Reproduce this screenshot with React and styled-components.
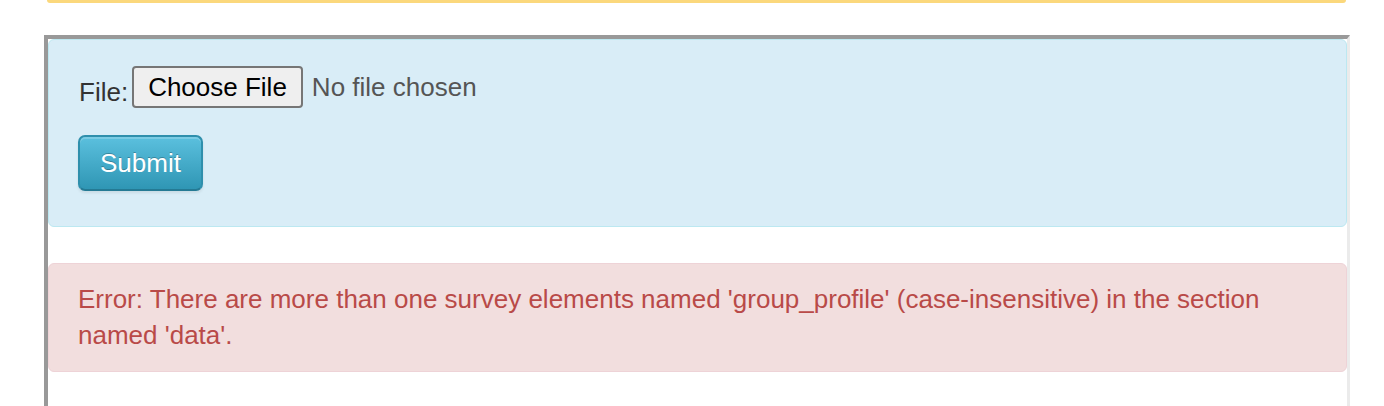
import React from 'react';
import styled, { createGlobalStyle } from 'styled-components';

const GlobalStyle = createGlobalStyle`
  body {
    margin: 0;
    background: #fff;
    font-family: "Liberation Sans", Arial, sans-serif;
    font-size: 26px;
    line-height: 36px;
    color: #333;
  }
`;

const WarningEdge = styled.div`
  margin: 0 38px 0 47px;
  height: 3px;
  background: #fbd87c;
  border-radius: 0 0 8px 8px;
`;

const Frame = styled.div`
  margin: 32px 34px 0 44px;
  min-height: 380px;
  border-style: solid;
  border-width: 4px 3px 0 4px;
  border-color: #999 #ebebeb #ebebeb #999;
`;

const Alert = styled.div`
  border: 1px solid ${p => (p.$error ? '#eed3d7' : '#bce8f1')};
  background: ${p => (p.$error ? '#f2dede' : '#d9edf7')};
  color: ${p => (p.$error ? '#b94a48' : '#333')};
  border-radius: 6px;
  padding: ${p => (p.$error ? '17px 30px 18px 29px' : '26px 30px 35px 29px')};
  margin-bottom: 36px;
`;

const FieldRow = styled.div`
  display: flex;
  align-items: center;
  height: 42px;
  margin-bottom: 27px;
`;

const Label = styled.label`
  margin: 9px 4px 0 1px;
`;

const FileButton = styled.button`
  font: inherit;
  line-height: 30px;
  height: 42px;
  padding: 0 14px;
  color: #000;
  background: #efefef;
  border: 2px solid #767676;
  border-radius: 4px;
`;

const FileStatus = styled.span`
  margin-left: 9px;
  color: #555;
  margin-bottom: 1px;
`;

const SubmitButton = styled.button`
  display: block;
  font: inherit;
  width: 125px;
  height: 56px;
  color: #fff;
  text-shadow: 0 -1px 0 rgba(0, 0, 0, 0.25);
  background: linear-gradient(to bottom, #5bc0de, #2f96b4);
  border: 2px solid #2f8fac;
  border-bottom-color: #247a94;
  border-radius: 7px;
  box-shadow: inset 0 2px 0 rgba(255, 255, 255, 0.2), 0 2px 3px rgba(0, 0, 0, 0.08);
  padding: 0;
`;

export default function App() {
  return (
    <>
      <GlobalStyle />
      <WarningEdge />
      <Frame>
        <Alert>
          <FieldRow>
            <Label>File:</Label>
            <FileButton type="button">Choose File</FileButton>
            <FileStatus>No file chosen</FileStatus>
          </FieldRow>
          <SubmitButton type="button">Submit</SubmitButton>
        </Alert>
        <Alert $error>
          Error: There are more than one survey elements named 'group_profile' (case-insensitive) in the section named 'data'.
        </Alert>
      </Frame>
    </>
  );
}
